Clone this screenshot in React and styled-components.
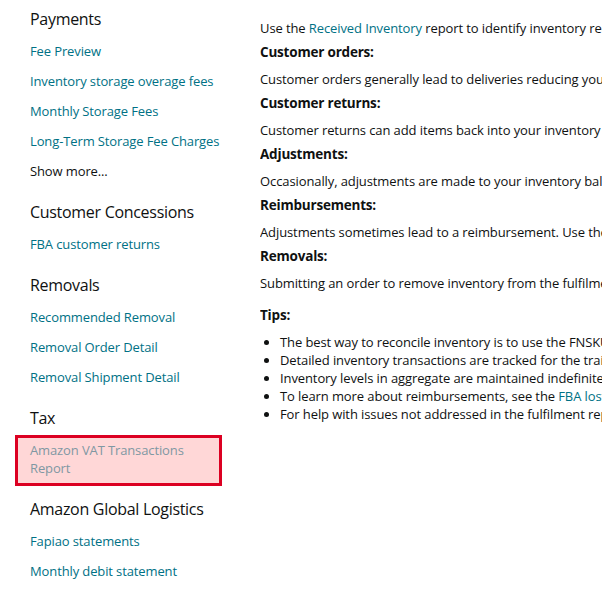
import React from "react";
import styled, { createGlobalStyle } from "styled-components";

const GlobalStyle = createGlobalStyle`
  html, body {
    margin: 0;
    padding: 0;
    background: #fff;
  }
  body {
    font-family: "Open Sans", "Noto Sans", "Liberation Sans", sans-serif;
    color: #0f1111;
    -webkit-font-smoothing: antialiased;
  }
`;

const Page = styled.div`
  display: flex;
  width: 602px;
  height: 604px;
  overflow: hidden;
`;

const Sidebar = styled.nav`
  flex: 0 0 260px;
  box-sizing: border-box;
  padding: 8px 0 0 30px;
`;

const Section = styled.section`
  margin-bottom: 21px;
`;

const SectionTitle = styled.h3`
  margin: 0;
  font-size: 16px;
  line-height: 22px;
  font-weight: 400;
  letter-spacing: -0.3px;
  color: #0f1111;
`;

const NavLink = styled.a`
  display: block;
  margin-top: 12px;
  font-size: 13px;
  line-height: 18px;
  letter-spacing: -0.12px;
  color: ${(p) => (p.$plain ? "#0f1111" : "#007185")};
  text-decoration: none;
  cursor: pointer;
  position: relative;
  z-index: 0;
  width: ${(p) => (p.$highlight ? "170px" : "auto")};

  ${(p) =>
    p.$highlight &&
    `
    color: #7f98a3;
    &::before {
      content: "";
      position: absolute;
      left: -15px;
      top: -6px;
      right: -22px;
      bottom: -9px;
      background: #ffd7d7;
      border: 3px solid #dc0022;
      z-index: -1;
    }
  `}
`;

const Main = styled.main`
  flex: 1;
  min-width: 0;
  padding-top: 19px;
  white-space: nowrap;
  overflow: hidden;
  font-size: 13px;
`;

const Para = styled.p`
  margin: 0 0 5px;
  line-height: 18px;
  letter-spacing: -0.1px;
`;

const Heading = styled.h4`
  margin: 0 0 8px;
  font-size: 13.5px;
  line-height: 20px;
  font-weight: 700;
  letter-spacing: -0.2px;
  margin-top: ${(p) => (p.$spaced ? "13px" : "0")};
`;

const InlineLink = styled.a`
  color: #007185;
  text-decoration: none;
`;

const Tips = styled.ul`
  margin: 0;
  padding-left: 20px;
  line-height: 18px;
  letter-spacing: -0.1px;
`;

const nav = [
  {
    title: "Payments",
    links: [
      "Fee Preview",
      "Inventory storage overage fees",
      "Monthly Storage Fees",
      "Long-Term Storage Fee Charges",
      { label: "Show more...", plain: true },
    ],
  },
  { title: "Customer Concessions", links: ["FBA customer returns"] },
  {
    title: "Removals",
    links: ["Recommended Removal", "Removal Order Detail", "Removal Shipment Detail"],
  },
  { title: "Tax", links: [{ label: "Amazon VAT Transactions Report", highlight: true }] },
  {
    title: "Amazon Global Logistics",
    links: ["Fapiao statements", "Monthly debit statement"],
  },
];

const blocks = [
  ["Customer orders:", "Customer orders generally lead to deliveries reducing your inventory balance in the fulfilment network."],
  ["Customer returns:", "Customer returns can add items back into your inventory provided they are in sellable condition."],
  ["Adjustments:", "Occasionally, adjustments are made to your inventory balance to account for discrepancies."],
  ["Reimbursements:", "Adjustments sometimes lead to a reimbursement. Use the Reimbursements report to view details."],
  ["Removals:", "Submitting an order to remove inventory from the fulfilment network reduces your inventory balance."],
];

export default function App() {
  return (
    <>
      <GlobalStyle />
      <Page>
        <Sidebar>
          {nav.map((section) => (
            <Section key={section.title}>
              <SectionTitle>{section.title}</SectionTitle>
              {section.links.map((l) => {
                const item = typeof l === "string" ? { label: l } : l;
                return (
                  <NavLink key={item.label} $plain={item.plain} $highlight={item.highlight}>
                    {item.label}
                  </NavLink>
                );
              })}
            </Section>
          ))}
        </Sidebar>
        <Main>
          <Para>
            Use the <InlineLink>Received Inventory</InlineLink> report to identify inventory received into the fulfilment network.
          </Para>
          {blocks.map(([h, text]) => (
            <React.Fragment key={h}>
              <Heading>{h}</Heading>
              <Para>{text}</Para>
            </React.Fragment>
          ))}
          <Heading $spaced>Tips:</Heading>
          <Tips>
            <li>The best way to reconcile inventory is to use the FNSKU level of detail.</li>
            <li>Detailed inventory transactions are tracked for the trailing 18 months.</li>
            <li>Inventory levels in aggregate are maintained indefinitely.</li>
            <li>
              To learn more about reimbursements, see the <InlineLink>FBA lost and damaged inventory</InlineLink> policy.
            </li>
            <li>For help with issues not addressed in the fulfilment reports, contact Seller Support.</li>
          </Tips>
        </Main>
      </Page>
    </>
  );
}
